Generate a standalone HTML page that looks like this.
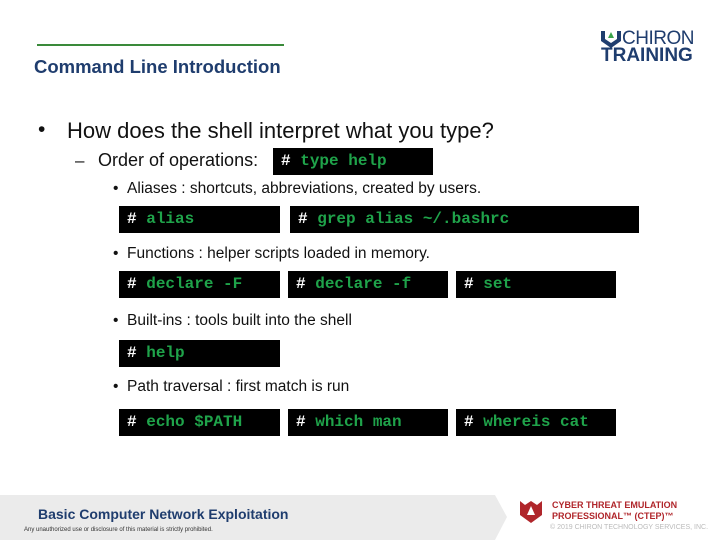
<!DOCTYPE html>
<html><head><style>
body{margin:0;width:720px;height:540px;position:relative;background:#fff;font-family:"Liberation Sans",sans-serif;overflow:hidden}
.a{position:absolute}
.c{position:absolute;background:#000;color:#1fa34a;font-family:"Liberation Mono",monospace;font-weight:bold;font-size:16px;line-height:27px;height:27px;box-sizing:border-box;padding-left:8px;white-space:pre}
.c b{color:#fff}
.t{position:absolute;color:#111;white-space:nowrap}
</style></head><body>
<div class="a" style="left:37px;top:44px;width:247px;height:2px;background:#3a8a3a"></div>
<div class="a" style="left:34px;top:56px;font-size:18.5px;font-weight:bold;color:#1f3d6e">Command Line Introduction</div>
<svg class="a" style="left:600px;top:30px" width="22" height="18" viewBox="0 0 22 18"><path d="M1 1h4v8l6 4 6-4V1h4v10l-10 7-10-7z" fill="#1f3d6e"/><path d="M8 8l3-6 3 6z" fill="#3aa34a"/></svg>
<div class="a" style="left:622px;top:28px;font-size:19px;color:#1f3d6e;letter-spacing:-0.5px">CHIRON</div>
<div class="a" style="left:601px;top:45px;font-size:19px;font-weight:bold;color:#1f3d6e">TRAINING</div>

<div class="t" style="left:38px;top:118px;font-size:21px">•</div>
<div class="t" style="left:67px;top:118px;font-size:22px">How does the shell interpret what you type?</div>
<div class="t" style="left:75px;top:151px;font-size:17px">–</div>
<div class="t" style="left:98px;top:150px;font-size:18px">Order of operations:</div>
<div class="c" style="left:273px;top:148px;width:160px"><b>#</b> type help</div>

<div class="t" style="left:113px;top:180px;font-size:15.5px">•&nbsp;&nbsp;Aliases : shortcuts, abbreviations, created by users.</div>
<div class="c" style="left:119px;top:206px;width:161px"><b>#</b> alias</div>
<div class="c" style="left:290px;top:206px;width:349px"><b>#</b> grep alias ~/.bashrc</div>

<div class="t" style="left:113px;top:245px;font-size:15.5px">•&nbsp;&nbsp;Functions : helper scripts loaded in memory.</div>
<div class="c" style="left:119px;top:271px;width:161px"><b>#</b> declare -F</div>
<div class="c" style="left:288px;top:271px;width:160px"><b>#</b> declare -f</div>
<div class="c" style="left:456px;top:271px;width:160px"><b>#</b> set</div>

<div class="t" style="left:113px;top:312px;font-size:15.5px">•&nbsp;&nbsp;Built-ins : tools built into the shell</div>
<div class="c" style="left:119px;top:340px;width:161px"><b>#</b> help</div>

<div class="t" style="left:113px;top:378px;font-size:15.5px">•&nbsp;&nbsp;Path traversal : first match is run</div>
<div class="c" style="left:119px;top:409px;width:161px"><b>#</b> echo $PATH</div>
<div class="c" style="left:288px;top:409px;width:160px"><b>#</b> which man</div>
<div class="c" style="left:456px;top:409px;width:160px"><b>#</b> whereis cat</div>

<svg class="a" style="left:0;top:495px" width="510" height="45"><path d="M0 0H495L507 22L495 45H0z" fill="#ebebeb"/></svg>
<div class="a" style="left:38px;top:506px;font-size:14px;font-weight:bold;color:#1f3d6e">Basic Computer Network Exploitation</div>
<div class="a" style="left:24px;top:527px;font-size:6px;color:#333">Any unauthorized use or disclosure of this material is strictly prohibited.</div>
<svg class="a" style="left:519px;top:500px" width="24" height="24" viewBox="0 0 24 24"><path d="M1 1l5 4 6-4 6 4 5-4v14l-11 8L1 15z" fill="#b0262b"/><path d="M12 6l4 9h-8z" fill="#fff"/></svg>
<div class="a" style="left:552px;top:500px;font-size:9px;font-weight:bold;color:#b0262b;line-height:11px">CYBER THREAT EMULATION<br>PROFESSIONAL™ (CTEP)™</div>
<div class="a" style="left:550px;top:524px;font-size:7px;color:#bbb">© 2019 CHIRON TECHNOLOGY SERVICES, INC.</div>
</body></html>
